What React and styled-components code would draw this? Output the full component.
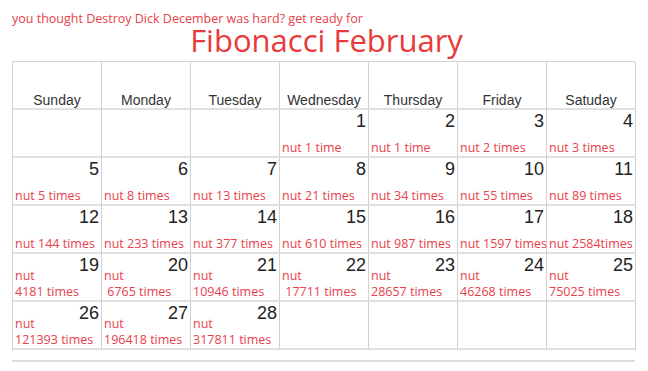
import styled, { createGlobalStyle } from "styled-components";

const GlobalStyle = createGlobalStyle`
  html, body {
    margin: 0;
    padding: 0;
    background: #fff;
  }
`;

const weekdays = ["Sunday", "Monday", "Tuesday", "Wednesday", "Thursday", "Friday", "Satuday"];

// nut counts per day, the second line goes under "nut" when the number gets long
const days = [
  { n: 1, text: "nut 1 time" },
  { n: 2, text: "nut 1 time" },
  { n: 3, text: "nut 2 times" },
  { n: 4, text: "nut 3 times" },
  { n: 5, text: "nut 5 times" },
  { n: 6, text: "nut 8 times" },
  { n: 7, text: "nut 13 times" },
  { n: 8, text: "nut 21 times" },
  { n: 9, text: "nut 34 times" },
  { n: 10, text: "nut 55 times" },
  { n: 11, text: "nut 89 times" },
  { n: 12, text: "nut 144 times" },
  { n: 13, text: "nut 233 times" },
  { n: 14, text: "nut 377 times" },
  { n: 15, text: "nut 610 times" },
  { n: 16, text: "nut 987 times" },
  { n: 17, text: "nut 1597 times" },
  { n: 18, text: "nut 2584times" },
  { n: 19, text: "nut", more: "4181 times" },
  { n: 20, text: "nut", more: "\u00a06765 times" },
  { n: 21, text: "nut", more: "10946 times" },
  { n: 22, text: "nut", more: "\u00a017711 times" },
  { n: 23, text: "nut", more: "28657 times" },
  { n: 24, text: "nut", more: "46268 times" },
  { n: 25, text: "nut", more: "75025 times" },
  { n: 26, text: "nut", more: "121393 times" },
  { n: 27, text: "nut", more: "196418 times" },
  { n: 28, text: "nut", more: "317811 times" },
];

function App() {
  const cells = [null, null, null, ...days, null, null, null, null];

  return (
    <Page>
      <GlobalStyle />
      <Tagline>you thought Destroy Dick December was hard? get ready for</Tagline>
      <Title>Fibonacci February</Title>
      <Calendar>
        {weekdays.map((d) => (
          <HeadCell key={d}>{d}</HeadCell>
        ))}
        {cells.map((day, i) => (
          <DayCell key={i}>
            {day && (
              <>
                <DayNum>{day.n}</DayNum>
                <Nut>
                  {day.text}
                  {day.more && <br />}
                  {day.more}
                </Nut>
              </>
            )}
          </DayCell>
        ))}
      </Calendar>
      <Rule />
    </Page>
  );
}

export default App;

const Page = styled.div`
  width: 623px;
  padding: 11px 0 0 12px;
`;

const Tagline = styled.div`
  font-family: "Open Sans", sans-serif;
  font-size: 12.5px;
  line-height: 16px;
  color: #e8404a;
`;

const Title = styled.h1`
  margin: -6px 0 2px;
  font-family: "Open Sans", sans-serif;
  font-weight: 400;
  font-size: 31px;
  line-height: 38px;
  color: #e83a3a;
  text-align: center;
  padding-left: 6px;
`;

const Calendar = styled.div`
  display: grid;
  grid-template-columns: repeat(7, 89px);
  grid-auto-rows: 48px;
  border-top: 1px solid #d2d2d2;
  border-left: 1px solid #d2d2d2;
`;

const HeadCell = styled.div`
  display: flex;
  align-items: flex-end;
  justify-content: center;
  border-right: 1px solid #d2d2d2;
  border-bottom: 2px solid #e0e0e0;
  font-family: "Liberation Sans", Arial, sans-serif;
  font-size: 14px;
  color: #333;
`;

const DayCell = styled.div`
  display: flex;
  flex-direction: column;
  justify-content: space-between;
  padding: 2px 2px 0 2px;
  border-right: 1px solid #d2d2d2;
  border-bottom: 2px solid #e0e0e0;
`;

const DayNum = styled.div`
  flex-shrink: 0;
  margin-bottom: -6px;
  font-family: "Liberation Sans", Arial, sans-serif;
  font-size: 18px;
  line-height: 18px;
  color: #222;
  text-align: right;
`;

const Nut = styled.div`
  flex-shrink: 0;
  font-family: "Open Sans", sans-serif;
  font-size: 12.5px;
  line-height: 16px;
  color: #e8404a;
  white-space: nowrap;
`;

const Rule = styled.div`
  height: 2px;
  margin-top: 10px;
  background: #dcdcdc;
`;
